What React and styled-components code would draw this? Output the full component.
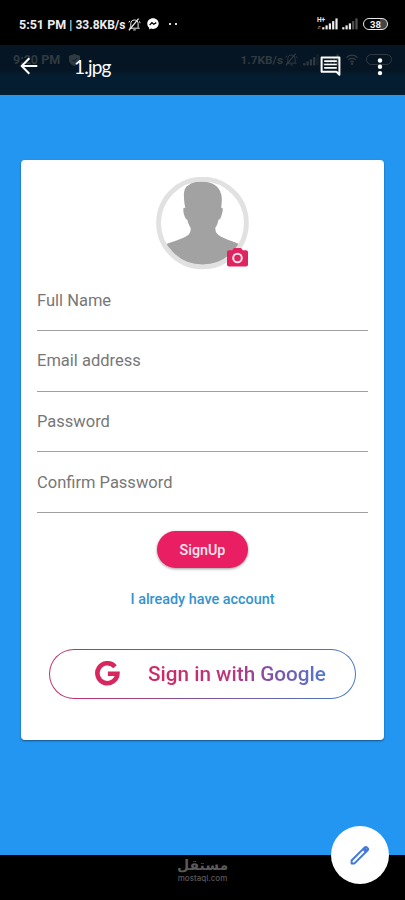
import styled, { createGlobalStyle } from "styled-components";

const fields = ["Full Name", "Email address", "Password", "Confirm Password"];

const BellOff = ({ size = 13 }) => (
    <svg width={size} height={size} viewBox="0 0 13 13" fill="none" stroke="currentColor" strokeWidth="1">
        <path d="M2.8 9.8V5.6C2.8 3.4 4.2 2 6.4 2s3.7 1.4 3.7 3.6v4.2M1.2 10.2h10.5M5.2 11.9h2.6M.8 4.4l1-1.6M12.1 5.2l-.6-1.8" />
        <path d="M.9 12.3 10.6.6" strokeWidth="1.3" />
    </svg>
);

const Signal = ({ level }) => (
    <svg width="16" height="12" viewBox="0 0 16 12">
        {[2.2, 4, 6, 8.3, 11].map((h, i) => (
            <rect key={h} x={i * 3.3 + 0.2} y={11.4 - h} width="2.2" height={h} fill="currentColor" opacity={i < level ? 1 : 0.35} />
        ))}
    </svg>
);

const Avatar = () => (
    <svg width="93" height="93" viewBox="0 0 93 93">
        <defs>
            <clipPath id="face"><circle cx="46.5" cy="46" r="42.3" /></clipPath>
        </defs>
        <path
            clipPath="url(#face)"
            fill="#a2a2a2"
            d="M29.4 31.3c-.8-1-2-.6-2.100.7-.1 3 .8 6.400 2.100 9 .6 1.200 1.300 1.300 1.900 1.700.7 3.300 1.800 5.600 3.300 8 .3 3.500-.5 5.800-2.800 7.500C26 62.300 17 64.200 9.500 67.500L6 93h81l-2-25c-7-3.600-17-6-22.500-10-2.400-1.800-3.200-4-3.200-7.200 1.800-2.300 2.600-5 3.200-8 .8-.4 1.600-.6 2.100-1.800 1.100-2.700 2.200-6 2.200-8.700-.2-1.400-1-1.700-1.700-1.400.7-4.300 1.200-9.300.1-13.700C63.300 9.400 56 4.200 45 4.500c-6.500.2-9.500 1.300-12 3.600-4 1.300-5.200 6.500-5.100 10.900.1 5 .7 8.700 1.500 12.300Z"
        />
        <circle cx="46.5" cy="46" r="43.9" fill="none" stroke="#e1e1e1" strokeWidth="4.8" />
    </svg>
);

const CameraIcon = () => (
    <svg width="21" height="19" viewBox="0 0 21 19">
        <path fill="#e0245f" d="M7 0h7l1.8 2.2H19c1.200 0 2 .8 2 2v12.300c0 1.200-.8 2-2 2H2c-1.200 0-2-.8-2-2V4.200c0-1.200.8-2 2-2h3.200Z" />
        <circle cx="10.5" cy="10" r="4.3" fill="none" stroke="#fbe3eb" strokeWidth="2" />
    </svg>
);

const App = () => {
    return (
        <Screen>
            <GlobalStyle />
            <StatusBar>
                <StatusText>5:51 PM <span>|</span> <small>33.8KB/s</small></StatusText>
                <BellOff />
                <svg width="12" height="12" viewBox="0 0 12 12">
                    <path fill="#fff" d="M6 .3C2.7.3.3 2.600.3 5.700c0 1.700.7 3 1.900 4v1.900l1.800-1c.6.2 1.300.3 2 .3 3.300 0 5.700-2.300 5.700-5.300S9.300.3 6 .3Z" />
                    <path fill="none" stroke="#000" strokeWidth="1.3" d="m2.600 7.100 2.300-2.400 1.900 1.500 2.500-1.600" />
                </svg>
                <Dots><i /><i /></Dots>
                <StatusIcons>
                    <Network><b>H+</b><span>↓↑</span></Network>
                    <Signal level={5} />
                    <SecondSignal><Signal level={3} /></SecondSignal>
                    <Battery>38</Battery>
                </StatusIcons>
            </StatusBar>
            <Header>
                <GhostBar>
                    <GhostTime>9:20 PM</GhostTime>
                    <svg width="11" height="12" viewBox="0 0 11 12">
                        <path fill="currentColor" d="M5.500 0 11 1.800v4C11 9 8.500 11 5.500 12 2.500 11 0 9 0 5.800v-4Z" />
                        <path stroke="#051a2b" fill="none" d="m3 5.500 2 2 3-3.500" />
                    </svg>
                    <GhostRight>
                        <GhostSpeed>1.7KB/s</GhostSpeed>
                        <BellOff />
                        <GhostSignals><Signal level={4} /><Signal level={5} /></GhostSignals>
                        <svg width="12" height="11" viewBox="0 0 12 11" fill="none" stroke="currentColor" strokeWidth="1.5">
                            <path d="M.5 3.500c3.300-3 7.700-3 11 0M2.300 5.800c2.300-2 5.100-2 7.400 0M4.200 8c1.200-1 2.400-1 3.600 0" />
                            <circle cx="6" cy="9.7" r=".5" />
                        </svg>
                        <GhostBattery />
                    </GhostRight>
                </GhostBar>
                <BackIcon width="18" height="18" viewBox="0 0 18 18">
                    <path d="M17.300 9H2M9.300 1.200 1.700 9l7.600 7.800" />
                </BackIcon>
                <Title>1.jpg</Title>
                <HeaderIcons>
                    <svg width="21" height="21" viewBox="0 0 21 21" fill="none" stroke="#fff">
                        <path strokeWidth="2" strokeLinejoin="round" d="M1.600 1.400h17.800v17.400l-3-3H1.600Z" />
                        <path strokeWidth="1.7" d="M4.200 5.200h12.600M4.200 8.500h12.600M4.200 11.800h12.600" />
                    </svg>
                    <svg width="6" height="18" viewBox="0 0 6 18" fill="#fff">
                        <circle cx="3" cy="2.5" r="2.2" />
                        <circle cx="3" cy="8.8" r="2.2" />
                        <circle cx="3" cy="15.1" r="2.2" />
                    </svg>
                </HeaderIcons>
            </Header>
            <Main>
                <Card>
                    <AvatarBox>
                        <Avatar />
                        <CameraBadge><CameraIcon /></CameraBadge>
                    </AvatarBox>
                    <Form>
                        {fields.map((e) => (
                            <Field key={e}>{e}</Field>
                        ))}
                    </Form>
                    <SignUpButton>SignUp</SignUpButton>
                    <AccountLink>I already have account</AccountLink>
                    <GoogleButton>
                        <svg width="25" height="25" viewBox="0 0 25 25">
                            <path fill="none" stroke="#d9265f" strokeWidth="4.6" d="M20 5.700A10 10 0 1 0 22.400 12.700H12.900" />
                        </svg>
                        <GoogleText>Sign in with Google</GoogleText>
                    </GoogleButton>
                </Card>
            </Main>
            <Footer>
                <Watermark lang="ar">مستقل</Watermark>
                <WatermarkUrl>mostaql.com</WatermarkUrl>
            </Footer>
            <EditButton>
                <svg width="20" height="20" viewBox="0 0 20 20" fill="none" stroke="#4478dc">
                    <path strokeWidth="2" strokeLinejoin="round" d="M1.600 15.500 14.700 2.400c.7-.7 1.500-.7 2.200 0l.7.7c.7.7.7 1.500 0 2.200L4.500 18.400H1.600Z" />
                    <path strokeWidth="3.8" d="m13.700 3.400 2.900 2.900" />
                </svg>
            </EditButton>
        </Screen>
    )
}

export default App;

const GlobalStyle = createGlobalStyle`
  body {
    margin: 0;
    background-color: #000000;
    font-family: Roboto, "Liberation Sans", sans-serif;
  }
  * {
    box-sizing: border-box;
  }
  svg {
    display: block;
    flex-shrink: 0;
  }
`;

const Screen = styled.div`
  position: relative;
  display: flex;
  flex-direction: column;
  width: 405px;
  height: 900px;
  overflow: hidden;
`;

const StatusBar = styled.div`
  display: flex;
  align-items: center;
  height: 45px;
  padding: 3px 17px 0 19px;
  color: #ededed;
  background-color: #000000;
`;
const StatusText = styled.div`
  width: 109px;
  font-size: 12.5px;
  font-weight: 700;
  white-space: nowrap;
  & + svg + svg {
    margin-left: 6px;
  }
  span {
    font-weight: 400;
  }
  small {
    font-size: 12px;
  }
`;
const Dots = styled.div`
  display: flex;
  gap: 4px;
  margin-left: 10px;
  i {
    width: 2px;
    height: 2px;
    background-color: #dddddd;
  }
`;
const StatusIcons = styled.div`
  display: flex;
  align-items: center;
  margin-left: auto;
`;
const Network = styled.div`
  display: flex;
  flex-direction: column;
  width: 5px;
  height: 14px;
  font-size: 6.5px;
  line-height: 7px;
  white-space: nowrap;
  span {
    font-size: 5px;
    letter-spacing: -1px;
  }
`;
const SecondSignal = styled.div`
  margin: 0 5px 0 4px;
`;
const Battery = styled.div`
  display: flex;
  align-items: center;
  justify-content: center;
  width: 25px;
  height: 12px;
  border: 1px solid #e8e8e8;
  border-radius: 6px;
  background: linear-gradient(to right, #000000 70%, #444444 70%);
  font-size: 9.5px;
  font-weight: 700;
`;

const Header = styled.div`
  position: relative;
  display: flex;
  align-items: center;
  height: 50px;
  padding: 0 22px 7px 20px;
  background: linear-gradient(#051523 50%, #051d30 60%);
`;
const BackIcon = styled.svg`
  margin-bottom: 1px;
  fill: none;
  stroke: #ffffff;
  stroke-width: 2;
`;
const Title = styled.div`
  margin-left: 36px;
  color: #ffffff;
  font-family: Lato, sans-serif;
  font-size: 19px;
  letter-spacing: -0.8px;
`;
const HeaderIcons = styled.div`
  display: flex;
  align-items: center;
  gap: 36px;
  margin-left: auto;
`;
const GhostBar = styled.div`
  position: absolute;
  top: 7px;
  left: 13px;
  right: 13px;
  display: flex;
  align-items: center;
  height: 15px;
  color: #303a40;
  font-weight: 700;
  z-index: 0;
  & ~ * {
    z-index: 1;
  }
`;
const GhostTime = styled.div`
  width: 56px;
  font-size: 12.5px;
`;
const GhostRight = styled.div`
  display: flex;
  align-items: center;
  margin-left: auto;
`;
const GhostSpeed = styled.div`
  margin-right: 2px;
  font-size: 11.8px;
`;
const GhostSignals = styled.div`
  display: flex;
  gap: 4px;
  margin: 0 7px 0 5px;
`;
const GhostBattery = styled.div`
  width: 26px;
  height: 11px;
  margin-left: 8px;
  border: 1px solid currentColor;
  border-radius: 6px;
`;

const Main = styled.div`
  height: 760px;
  padding: 65px 21px 0;
  background-color: #2396f2;
`;
const Card = styled.div`
  display: flex;
  flex-direction: column;
  align-items: center;
  height: 580px;
  padding: 17px 16px 0;
  border-radius: 4px;
  background-color: #ffffff;
  box-shadow: 0 1px 2px rgba(0, 0, 0, 0.45);
`;
const AvatarBox = styled.div`
  position: relative;
  width: 93px;
  height: 93px;
`;
const CameraBadge = styled.div`
  position: absolute;
  left: 71px;
  top: 71px;
`;
const Form = styled.div`
  width: 100%;
`;
const Field = styled.div`
  height: 60.8px;
  padding-top: 20.6px;
  border-bottom: 1px solid #a0a0a0;
  color: #777777;
  font-size: 16.5px;
  line-height: 20px;
`;
const SignUpButton = styled.button`
  width: 91px;
  height: 37px;
  margin-top: 18px;
  padding: 0;
  border: 0;
  border-radius: 19px;
  color: #fde8ef;
  background-color: #e91e63;
  box-shadow: 0 1px 3px rgba(0, 0, 0, 0.4);
  font-family: inherit;
  font-size: 14.3px;
  font-weight: 500;
`;
const AccountLink = styled.div`
  margin-top: 23px;
  color: #3293cf;
  font-size: 14.4px;
  font-weight: 500;
  line-height: 18px;
`;
const GoogleButton = styled.div`
  display: flex;
  align-items: center;
  width: 307px;
  height: 50px;
  margin-top: 39.4px;
  padding-left: 44.5px;
  border: 1px solid transparent;
  border-radius: 25px;
  background: linear-gradient(#ffffff, #ffffff) padding-box, linear-gradient(to right, #c22e68, #4479c4) border-box;
`;
const GoogleText = styled.div`
  margin-left: 28.5px;
  padding-top: 1px;
  color: transparent;
  background: linear-gradient(to right, #d02863 0%, #bd3477 45%, #7f50a8 70%, #5379d0 100%);
  background-clip: text;
  font-size: 20.7px;
  font-weight: 500;
  white-space: nowrap;
`;

const Footer = styled.div`
  display: flex;
  flex-direction: column;
  align-items: center;
  height: 45px;
  padding-top: 2px;
  color: #5a5a5a;
  background-color: #000000;
`;
const Watermark = styled.div`
  height: 17px;
  font-family: "DejaVu Sans", sans-serif;
  font-size: 14px;
  font-weight: 700;
  line-height: 17px;
`;
const WatermarkUrl = styled.div`
  font-family: Inter, sans-serif;
  font-size: 8px;
  font-weight: 500;
  line-height: 9px;
`;
const EditButton = styled.div`
  position: absolute;
  left: 331px;
  top: 826px;
  display: flex;
  align-items: center;
  justify-content: center;
  width: 58px;
  height: 58px;
  border-radius: 50%;
  background-color: #ffffff;
`;
